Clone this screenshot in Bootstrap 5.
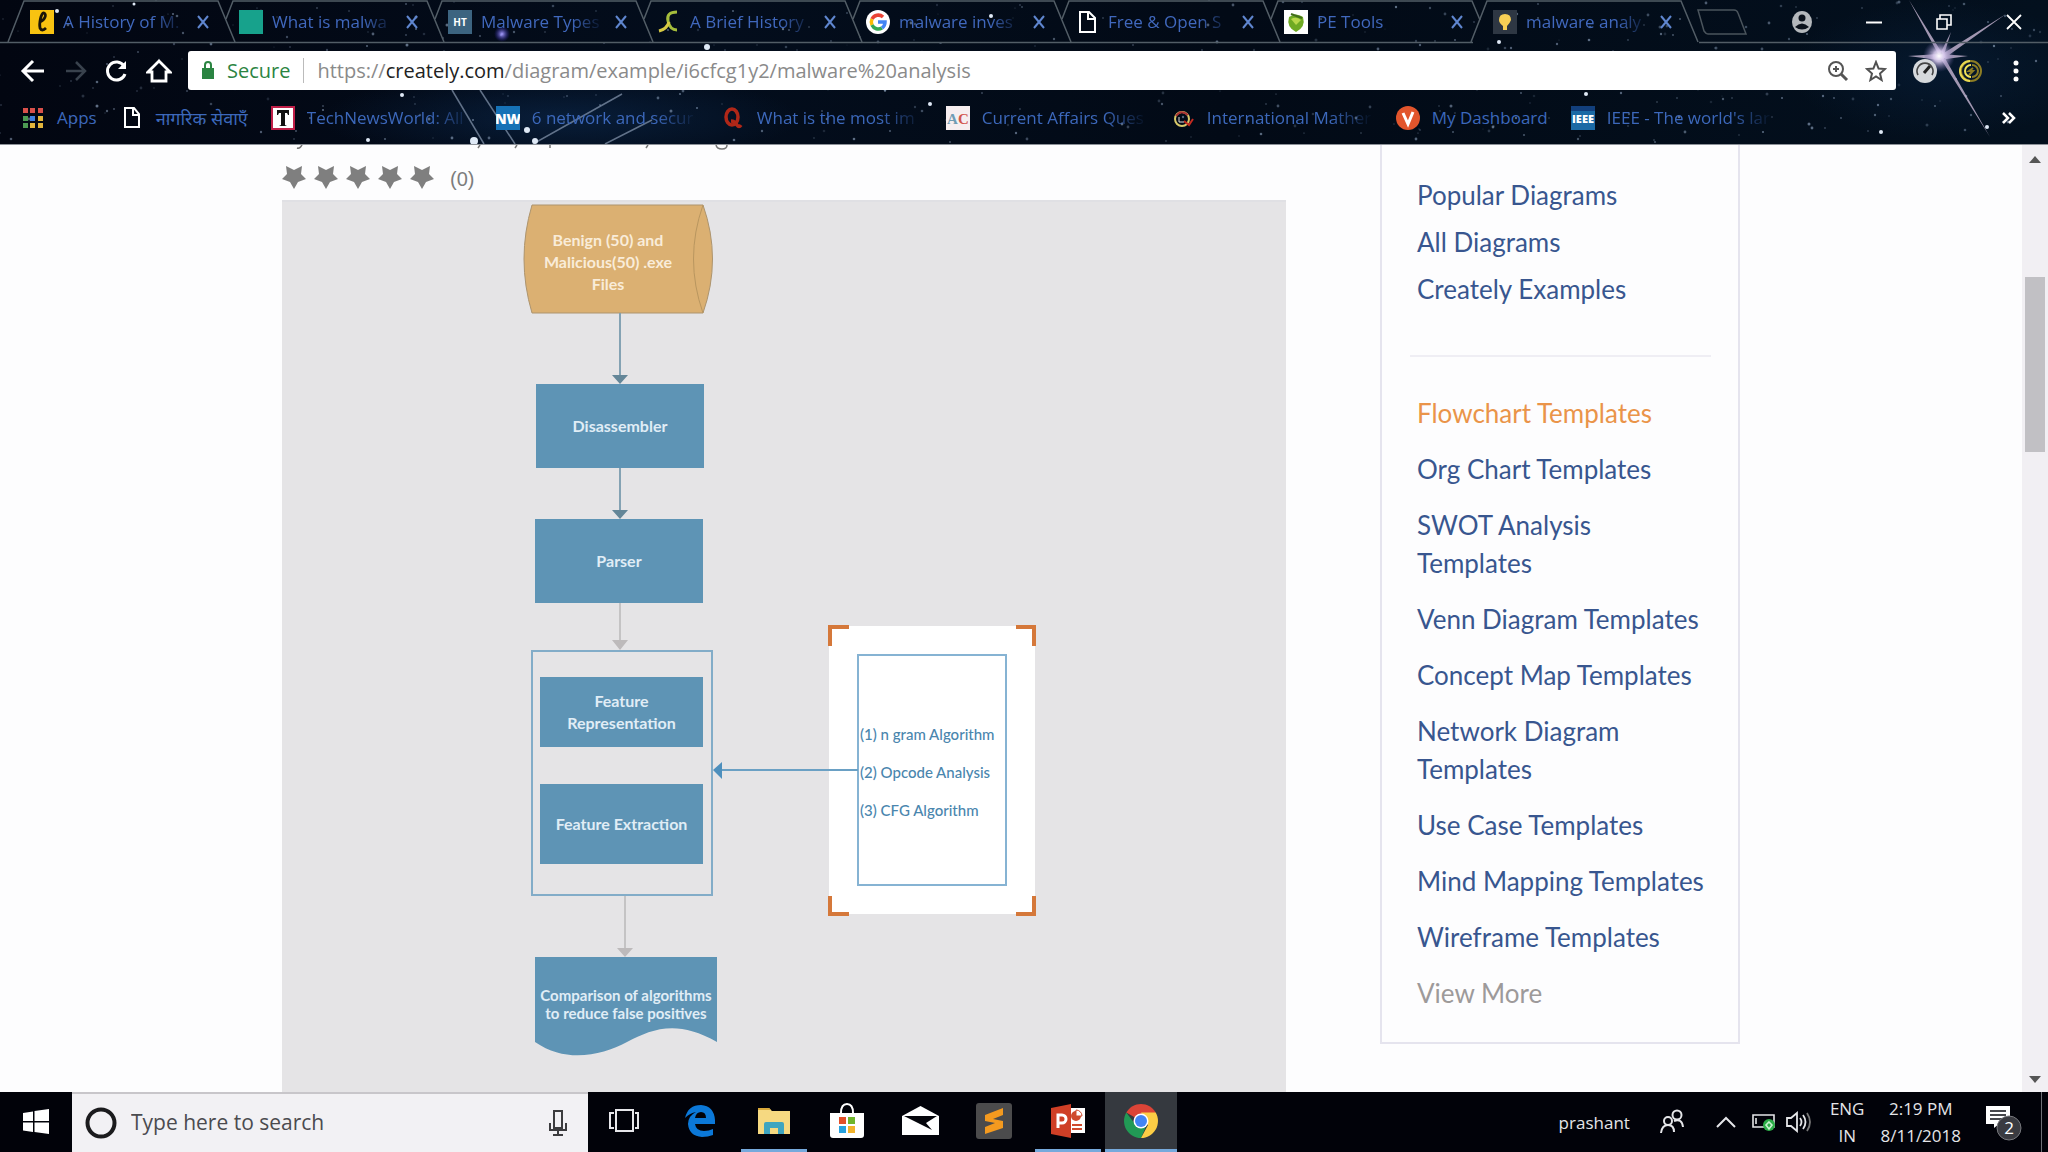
<!DOCTYPE html>
<html lang="en">
<head>
<meta charset="utf-8">
<meta name="viewport" content="width=device-width, initial-scale=1">
<title>malware analysis</title>
<link rel="stylesheet" href="https://cdn.jsdelivr.net/npm/bootstrap@5.3.0/dist/css/bootstrap.min.css">
<style>
  body { font-family: "Open Sans", "Noto Sans", sans-serif; background: #fdfdfe; overflow: hidden; }
  svg { display: block; flex: none; }
  button { background: none; border: 0; padding: 0; color: inherit; }
  a { text-decoration: none; }

  /* browser frame */
  .frame { height: 145px; background: linear-gradient(90deg, #020611, #030d1c 35%, #020a16 60%, #03101e); border-bottom: 1px solid #8d9299; color: #fff; z-index: 0; }
  .sky { z-index: -1; width: 100%; height: 144px; }
  .tabstrip { height: 43px; }
  .tab-slot { width: 209px; padding-left: 30px; height: 43px; }
  .tab-edge { left: 0; top: 0; overflow: visible; }
  .tab-title { width: 126px; margin-left: 9px; font-size: 17px; line-height: 24px; color: #4068bd; }
  .fade-end { white-space: nowrap; overflow: hidden; -webkit-mask-image: linear-gradient(90deg, #000 74%, transparent 100%); mask-image: linear-gradient(90deg, #000 74%, transparent 100%); }
  .tab-close { margin-left: 11px; }
  .new-tab { margin: 0 0 0 24px; }
  .window-keys { gap: 54px; padding-right: 26px; height: 38px; }
  .toolbar { height: 55px; padding: 0 24px 0 20px; }
  .omnibox { height: 39px; background: #fff; border-radius: 3px; font-size: 20px; color: #8a8a8a; padding: 0 9px 0 13px; }
  .safe { color: #2b8442; }
  .host { color: #222; }
  .url-rule { width: 1px; height: 25px; background: #bbb; margin: 0 13px; }
  .bookmarks { height: 46px; padding-left: 21px; padding-bottom: 6px; gap: 23px; font-size: 17px; line-height: 24px; }
  .bookmarks a { color: #3c68bb; gap: 12px; }
  .bm-label.fade-end { width: 166px; }
  .bm-hindi { font-size: 18px; }
  .bm-icon { width: 24px; }
  .bm-icon svg { margin: auto; }

  /* page */
  .sheet { max-width: 1458px; gap: 94px; }
  .rating { height: 55px; color: #7d7d7d; font: 20px/30px "Liberation Sans", sans-serif; padding: 9px 0 0; }
  .board { height: 1000px; background: #e5e4e6; border-top: 2px solid #e0e0e4; font: 16px/22px Lato, sans-serif; }
  .board-line { left: 0; top: 0; }
  .node { position: absolute; display: flex; align-items: center; justify-content: center; text-align: center; color: #e0edf6; font-weight: 700; }
  .blue { background: #5e94b5; }
  .n-drum { left: 241px; top: 6px; width: 170px; height: 108px; color: #f9ecd9; }
  .n-dis { left: 254px; top: 182px; width: 168px; height: 84px; }
  .n-par { left: 253px; top: 317px; width: 168px; height: 84px; }
  .n-group { left: 249px; top: 448px; width: 182px; height: 246px; border: 2px solid #82acc8; }
  .n-rep { left: 258px; top: 475px; width: 163px; height: 70px; }
  .n-ext { left: 258px; top: 582px; width: 163px; height: 80px; }
  .n-doc { left: 253px; top: 755px; width: 182px; height: 98px; font-size: 15px; line-height: 18px; padding-bottom: 4px; white-space: nowrap; }
  .n-note { left: 547px; top: 424px; width: 206px; height: 288px; background: #fff; padding: 28px; font-weight: 500; }
  .note-inner { border: 2px solid #86b3d3; color: #4a86ae; line-height: 38px; font-size: 15px; text-align: left; white-space: nowrap; padding: 4px 0 0 1px; }

  .side { width: 360px; border: 2px solid #e5e4ee; border-top: 0; padding: 31px 27px 12px 35px; font: 26px/38px Lato, sans-serif; }
  .side a { display: block; color: #38568f; }
  .side-top a { margin-bottom: 9px; }
  .side-list a { margin-bottom: 18px; }
  .side-rule { height: 2px; background: #efeef4; margin: 47px 0 37px -7px; }
  .side a.current { color: #ea9449; }
  .side a.more { color: #9d9a9a; }
  .scroll-rail { width: 26px; background: #f1eff3; padding: 10px 0 8px; }
  .scroll-thumb { width: 20px; height: 175px; background: #c1c0c4; margin-top: 114px; }

  /* taskbar */
  .taskbar { height: 60px; background: #010209; color: #e4e5e8; }
  .start { width: 72px; }
  .finder { width: 516px; background: #f2f1f4; border-top: 2px solid #c8c6ca; padding: 0 20px 0 13px; }
  .finder input { border: 0; outline: 0; background: transparent; font-size: 21px; color: #444; min-width: 0; margin-left: 13px; padding: 0; }
  .finder input::placeholder { color: #4b4b4f; opacity: 1; }
  .apps-row { width: 513px; margin-left: 4px; }
  .app-key { width: 72px; border-bottom: 3px solid transparent; }
  .running { border-image: linear-gradient(90deg, transparent 8%, #76a9dc 8%, #76a9dc 92%, transparent 92%) 3; border-style: solid; border-width: 0 0 3px; }
  .front { background: #35393f; border-bottom-color: #76a9dc; }
  .tray { font-size: 17px; line-height: 27px; }
  .tray-end { width: 1px; background: #6d6f76; margin-left: 18px; margin-right: 6px; }
</style>
</head>
<body>
<div class="d-flex flex-column vh-100">

  <header class="frame position-relative flex-shrink-0">
    <svg class="sky position-absolute" id="sky" aria-hidden="true">
      <defs>
        <radialGradient id="glow"><stop offset="0" stop-color="#fff"/><stop offset=".35" stop-color="#d8c9ee" stop-opacity=".9"/><stop offset="1" stop-color="#6a5fa0" stop-opacity="0"/></radialGradient>
        <radialGradient id="violet"><stop offset="0" stop-color="#a9a0ff"/><stop offset="1" stop-color="#2b1fb0" stop-opacity="0"/></radialGradient>
        <radialGradient id="haze"><stop offset="0" stop-color="#0c2a4f" stop-opacity=".6"/><stop offset="1" stop-color="#0c2a4f" stop-opacity="0"/></radialGradient>
      </defs>
      <ellipse cx="560" cy="118" rx="240" ry="46" fill="url(#haze)"/>
      <ellipse cx="1940" cy="70" rx="150" ry="70" fill="url(#haze)" opacity=".6"/>
      <g id="dust" fill="#9fb4d0"></g>
      <g stroke="#9fb0c8" stroke-width="1.5" opacity=".6"><path d="M452 90 484 144"/><path d="M480 90 515 144"/><path d="M533 144 622 94"/><path d="M605 144 652 120"/></g>
      <circle cx="502" cy="34" r="8" fill="url(#violet)"/>
      <g fill="#dfe9f6"><circle cx="474" cy="141" r="4"/><circle cx="527" cy="130" r="3"/><circle cx="535" cy="141" r="3"/><circle cx="402" cy="95" r="2"/><circle cx="368" cy="140" r="2"/><circle cx="707" cy="47" r="3"/><circle cx="930" cy="104" r="2"/><circle cx="991" cy="16" r="2"/><circle cx="1499" cy="42" r="2"/><circle cx="1586" cy="94" r="2"/><circle cx="57" cy="11" r="2"/><circle cx="134" cy="4" r="1.5"/><circle cx="1881" cy="132" r="2"/><circle cx="1987" cy="127" r="2"/></g>
      <path d="M1909 0 1936 50 1939 56 1990 137 1942 53Z M1939 56 2006 14 1942 60Z M1939 56 1951 32 1943 58Z M1908 56 1939 54 1968 56 1939 60Z" fill="#c9b8d4" opacity=".8"/>
      <circle cx="1939" cy="56" r="16" fill="url(#glow)"/>
      <path d="M0 42.500H1473M1699 42.500H4000" stroke="#525d66" stroke-width="1.500"/>
    </svg>

    <div class="tabstrip d-flex align-items-center" id="tabs">
      <div class="tab-slot d-flex align-items-center position-relative"><svg width="24" height="24"><rect width="24" height="24" fill="#f8c311"/><path d="M9 12C15 11 17 4 14 3S9 14 10 18Q12 22 16 18" fill="none" stroke="#1a1508" stroke-width="2.800"/></svg><span class="tab-title fade-end">A History of M.</span></div>
      <div class="tab-slot d-flex align-items-center position-relative"><svg width="24" height="24"><rect width="24" height="24" fill="#17a28c"/></svg><span class="tab-title fade-end">What is malwa</span></div>
      <div class="tab-slot d-flex align-items-center position-relative"><svg width="24" height="24"><rect width="24" height="24" fill="#3c6480"/><text x="12" y="16" font-size="10" font-weight="700" fill="#fff" text-anchor="middle">HT</text></svg><span class="tab-title fade-end">Malware Types</span></div>
      <div class="tab-slot d-flex align-items-center position-relative"><svg width="24" height="24" fill="none" stroke="#a5bd3c" stroke-width="3"><path d="M20 2Q9 2 11 11T20 20"/><path d="M12 12Q10 19 2 21" stroke="#d7c943"/></svg><span class="tab-title fade-end">A Brief History</span></div>
      <div class="tab-slot d-flex align-items-center position-relative"><svg width="24" height="24" fill="none" stroke-width="3.500"><circle cx="12" cy="12" r="12" fill="#fff"/><path d="M17 7A7 7 0 0 0 6 9" stroke="#ea4335"/><path d="M6 9A7 7 0 0 0 6 15" stroke="#fbbc05"/><path d="M6 15A7 7 0 0 0 16 18" stroke="#34a853"/><path d="M16 18Q19 16 19 12H12" stroke="#4285f4"/></svg><span class="tab-title fade-end">malware inves</span></div>
      <div class="tab-slot d-flex align-items-center position-relative"><svg width="24" height="24" fill="none" stroke="#fff" stroke-width="2"><path d="M5 2H14L20 8V22H5ZM13 2V9H20"/></svg><span class="tab-title fade-end">Free &amp; Open S</span></div>
      <div class="tab-slot d-flex align-items-center position-relative"><svg width="24" height="24"><rect width="24" height="24" fill="#fff"/><path d="M5 7Q12 2 19 7Q22 17 12 22Q2 17 5 7Z" fill="#6faa23"/><path d="M7 9Q12 6 17 10L12 15Z" fill="#b8d74a"/><path d="M7 4 18 8" stroke="#426e1b" stroke-width="2"/></svg><span class="tab-title fade-end">PE Tools</span></div>
      <div class="tab-slot d-flex align-items-center position-relative"><svg width="24" height="24"><rect width="24" height="24" fill="#2e3743"/><path d="M12 4Q18 4 18 10 17 13 14 16V20H10V16Q6 13 6 10 6 4 12 4Z" fill="#f7cf55"/></svg><span class="tab-title fade-end">malware analy</span></div>
      <button class="new-tab" aria-label="New tab"><svg width="52" height="26" fill="none" stroke="#4a545c" stroke-width="1.500"><path d="M2 1H38Q41 1 42 4L50 25H12Q10 25 8 22Z"/></svg></button>
      <div class="window-keys d-flex align-items-center ms-auto">
        <button aria-label="Profile"><svg width="20" height="22"><ellipse cx="10" cy="11" rx="10" ry="11" fill="#b4b8bc"/><circle cx="10" cy="7" r="3.500" fill="#0b121c"/><path d="M3 16Q10 9 17 16Q10 21 3 16Z" fill="#0b121c"/></svg></button>
        <button aria-label="Minimize"><svg width="16" height="16"><path d="M0 8.500H16" stroke="#fff" stroke-width="2"/></svg></button>
        <button aria-label="Restore"><svg width="16" height="16" fill="none" stroke="#fff" stroke-width="1.600"><path d="M1 5H11V15H1ZM4 5V1H15V11H11"/></svg></button>
        <button aria-label="Close"><svg width="16" height="16"><path d="M1 1 15 15M15 1 1 15" stroke="#fff" stroke-width="1.800"/></svg></button>
      </div>
    </div>

    <div class="toolbar d-flex align-items-center">
      <button class="me-3" aria-label="Back"><svg width="26" height="24" fill="none" stroke="#fff" stroke-width="3"><path d="M13 2 3 12 13 22M3 12H24"/></svg></button>
      <button class="ms-1 me-3" aria-label="Forward"><svg width="22" height="24" fill="none" stroke="#39424d" stroke-width="2.500"><path d="M10 3 19 12 10 21M19 12H0"/></svg></button>
      <button class="me-3" aria-label="Reload"><svg width="26" height="24" fill="none" stroke="#fff" stroke-width="3"><path d="M20 7A9 9 0 1 0 21 15"/><path d="M22 2V10H14Z" fill="#fff" stroke="none"/></svg></button>
      <button aria-label="Home"><svg width="26" height="24" fill="none" stroke="#fff" stroke-width="2.800"><path d="M13 2 2 13H6V22H20V13H24Z"/></svg></button>
      <div class="omnibox d-flex align-items-center flex-grow-1 ms-3">
        <svg width="14" height="20"><path d="M1 7H13V18H1Z" fill="#2b8442"/><path d="M4 8V4Q4 1 7 1T10 4V8" fill="none" stroke="#2b8442" stroke-width="2"/></svg>
        <span class="safe ms-2 ps-1">Secure</span><span class="url-rule"></span>
        <span class="flex-grow-1" role="textbox" aria-label="Address">https://<span class="host">creately.com</span>/diagram/example/i6cfcg1y2/malware%20analysis</span>
        <button class="me-3" aria-label="Zoom"><svg width="22" height="22" fill="none" stroke="#555" stroke-width="2"><circle cx="9" cy="9" r="7"/><path d="M14 14 20 20" stroke-width="3"/><path d="M6 9H12M9 6V12"/></svg></button>
        <button aria-label="Bookmark this page"><svg width="22" height="22" fill="none" stroke="#505050" stroke-width="2"><path d="M11 2 13.600 8.500 20 9 15 13.500 16.600 20 11 16.500 5.400 20 7 13.500 2 9 8.400 8.500Z"/></svg></button>
      </div>
      <button class="ms-3" aria-label="Speed extension"><svg width="26" height="26"><circle cx="13" cy="13" r="12" fill="#d6d9dc"/><path d="M6 17A8 8 0 1 1 20 17" fill="none" stroke="#444" stroke-width="1.600"/><path d="M12 15 18 8" stroke="#222" stroke-width="3"/></svg></button>
      <button class="ms-3 ps-1" aria-label="Coin extension"><svg width="26" height="26" fill="none" stroke="#8d7d24" stroke-width="2"><circle cx="13" cy="13" r="10"/><path d="M13 7A6 6 0 0 0 13 19" stroke="#f1e35a"/><path d="M12 3A10 10 0 0 0 12 23" stroke="#e8d952"/><path d="M14 7A6 6 0 0 1 14 19M15 10 11 13 15 13 11 17"/></svg></button>
      <button class="ms-4" aria-label="Menu"><svg width="16" height="24" fill="#fff"><circle cx="8" cy="4" r="2.500"/><circle cx="8" cy="12" r="2.500"/><circle cx="8" cy="20" r="2.500"/></svg></button>
    </div>

    <nav class="bookmarks d-flex align-items-center" aria-label="Bookmarks">
      <a href="#" class="d-flex align-items-center"><span class="bm-icon"><svg width="20" height="22"><g fill="#d8504a"><path d="M0 1h5v5H0zM7 1h5v5H7zM15 1h5v5h-5z"/></g><path d="M0 9h5v5H0zM0 16h5v5H0z" fill="#4c9a52"/><path d="M7 9h5v5H7z" fill="#3f7ede"/><path d="M15 9h5v5h-5zM7 16h5v5H7zM15 16h5v5h-5z" fill="#e2b53c"/></svg></span><span class="bm-label">Apps</span></a>
      <a href="#" class="d-flex align-items-center"><span class="bm-icon"><svg width="20" height="24" fill="none" stroke="#fff" stroke-width="2"><path d="M3 2H12L17 8V21H3ZM11 2V9H17"/></svg></span><span class="bm-label bm-hindi" lang="hi">नागरिक सेवाएँ</span></a>
      <a href="#" class="d-flex align-items-center"><span class="bm-icon"><svg width="24" height="24"><rect x="1" y="1" width="22" height="22" fill="#fff" stroke="#c01f48" stroke-width="2"/><path d="M6 4H18V9H17L16 7H14V19L16 20H8L10 19V7H8L7 9H6Z" fill="#111"/></svg></span><span class="bm-label fade-end">TechNewsWorld: All</span></a>
      <a href="#" class="d-flex align-items-center"><span class="bm-icon"><svg width="24" height="24"><rect width="24" height="24" fill="#1672b6"/><text x="12" y="18" font-size="14" font-weight="800" fill="#fff" text-anchor="middle">NW</text></svg></span><span class="bm-label fade-end">6 network and secur</span></a>
      <a href="#" class="d-flex align-items-center"><span class="bm-icon"><svg width="20" height="22" fill="none" stroke="#b02718" stroke-width="3.500"><ellipse cx="9" cy="10" rx="6" ry="8"/><path d="M8 14Q12 14 14 18 16 21 18 18"/></svg></span><span class="bm-label fade-end">What is the most im</span></a>
      <a href="#" class="d-flex align-items-center"><span class="bm-icon"><svg width="24" height="24" font-family="Liberation Serif" font-size="15" font-weight="700"><rect width="24" height="24" fill="#f6eef0"/><text x="1" y="18" fill="#6f9db4">A</text><text x="12" y="18" fill="#d2564e">C</text></svg></span><span class="bm-label fade-end">Current Affairs Ques</span></a>
      <a href="#" class="d-flex align-items-center"><span class="bm-icon"><svg width="22" height="22" fill="none" stroke-width="2"><circle cx="10" cy="12" r="7" stroke="#d8c96a"/><path d="M4 9Q9 2 16 8" stroke="#a33"/><path d="M12 14 17 18 21 12" stroke="#c22a20"/><path d="M7 10V15H12" stroke="#ddd" stroke-width="1"/></svg></span><span class="bm-label fade-end">International Mather</span></a>
      <a href="#" class="d-flex align-items-center"><span class="bm-icon"><svg width="24" height="24"><circle cx="12" cy="12" r="12" fill="#e2552c"/><path d="M7 7 12 18 17 6" fill="none" stroke="#fff" stroke-width="3"/></svg></span><span class="bm-label">My Dashboard</span></a>
      <a href="#" class="d-flex align-items-center"><span class="bm-icon"><svg width="24" height="24"><rect width="24" height="24" fill="#1b6aa5"/><rect width="24" height="5" fill="#123f7c"/><text x="12" y="17" font-size="11" font-weight="800" fill="#fff" text-anchor="middle">IEEE</text></svg></span><span class="bm-label fade-end">IEEE - The world's lar</span></a>
      <button class="ms-auto me-4 pe-2" aria-label="More bookmarks"><svg width="14" height="12" fill="none" stroke="#fff" stroke-width="2.500"><path d="M1 1 6 6 1 11M7 1 12 6 7 11"/></svg></button>
    </nav>
  </header>

  <div class="d-flex flex-grow-1 overflow-hidden">
    <main class="flex-grow-1 overflow-hidden">
      <div class="sheet d-flex align-items-start mx-auto">
        <section class="flex-grow-1 position-relative">
          <svg class="position-absolute top-0 start-0" width="500" height="6" fill="none" stroke="#777" stroke-width="1.500" aria-hidden="true"><path d="M20 0Q18 4 15 3M198 0 196 3M235 0 233 3M268 0V3M366 0 364 3M434 0Q435 4 440 4T445 0"/></svg>
          <div class="rating d-flex align-items-center">
            <div class="d-flex gap-2" id="stars" role="img" aria-label="0 of 5 stars"></div>
            <span class="ms-3 pt-1">(0)</span>
          </div>
          <div class="board position-relative">
            <svg class="board-line position-absolute" width="760" height="880" aria-hidden="true">
              <path d="M250 3H421Q440 57 421 111H250Q234 57 250 3Z" fill="#dbb072" stroke="#ad946e"/>
              <path d="M421 3Q402 57 421 111" fill="none" stroke="#b9965f"/>
              <g stroke="#84a2b3" stroke-width="2"><path d="M338 111V175M338 266V309"/></g>
              <path d="M330 173H346L338 182ZM330 308H346L338 317Z" fill="#648698"/>
              <g stroke="#c4c3c4" stroke-width="2"><path d="M338 401V440M343 694V748"/></g>
              <path d="M330 438H346L338 448ZM335 746H351L343 755Z" fill="#bdbabb"/>
              <path d="M253 755H435V840C395 817 370 827 345 840S285 862 253 840Z" fill="#5e94b5"/>
            </svg>
            <div class="node n-drum">Benign (50) and<br>Malicious(50) .exe<br>Files</div>
            <div class="node blue n-dis">Disassembler</div>
            <div class="node blue n-par">Parser</div>
            <div class="node n-group"></div>
            <div class="node blue n-rep">Feature<br>Representation</div>
            <div class="node blue n-ext">Feature Extraction</div>
            <div class="node n-doc">Comparison of algorithms<br>to reduce false positives</div>
            <div class="node n-note"><div class="note-inner w-100 h-100 d-flex flex-column justify-content-center"><div>(1) n gram Algorithm</div><div>(2) Opcode Analysis</div><div>(3) CFG Algorithm</div></div></div>
            <svg class="board-line position-absolute" width="760" height="880" aria-hidden="true">
              <path d="M437 568H576" stroke="#6aa0c4" stroke-width="2"/><path d="M431 568 440 560V577Z" fill="#4d8fbd"/>
              <g fill="none" stroke="#d5783a" stroke-width="4"><path d="M548 444V425H567M734 425H752V444M548 694V712H567M734 712H752V694"/></g>
            </svg>
          </div>
        </section>
        <aside class="side flex-shrink-0">
          <nav class="side-top"><a href="#">Popular Diagrams</a><a href="#">All Diagrams</a><a href="#">Creately Examples</a></nav>
          <div class="side-rule"></div>
          <nav class="side-list">
            <a href="#" class="current">Flowchart Templates</a><a href="#">Org Chart Templates</a><a href="#">SWOT Analysis<br>Templates</a><a href="#">Venn Diagram Templates</a><a href="#">Concept Map Templates</a><a href="#">Network Diagram<br>Templates</a><a href="#">Use Case Templates</a><a href="#">Mind Mapping Templates</a><a href="#">Wireframe Templates</a><a href="#" class="more">View More</a>
          </nav>
        </aside>
      </div>
    </main>
    <div class="scroll-rail d-flex flex-column align-items-center flex-shrink-0" aria-hidden="true">
      <svg width="12" height="8"><path d="M0 8 6 1 12 8Z" fill="#555"/></svg>
      <div class="scroll-thumb"></div>
      <svg class="mt-auto" width="12" height="8"><path d="M0 0 6 7 12 0Z" fill="#555"/></svg>
    </div>
  </div>

  <footer class="taskbar d-flex flex-shrink-0">
    <button class="start d-flex align-items-center justify-content-center" aria-label="Start"><svg width="26" height="26" fill="#fff"><path d="M0 4 10 2.500V12H0ZM11.500 2 26 0V12H11.500ZM0 13.500H10V23L0 21.500ZM11.500 13.500H26V25L11.500 23Z"/></svg></button>
    <div class="finder d-flex align-items-center">
      <svg width="33" height="33"><circle cx="16" cy="16" r="13.500" fill="none" stroke="#1b1b1d" stroke-width="4"/></svg>
      <input class="flex-grow-1" type="text" placeholder="Type here to search" aria-label="Search">
      <svg width="20" height="26" fill="none" stroke="#3c3c3e" stroke-width="2"><path d="M6 1H14V18H6ZM2 13V20H18V13M10 20V25M5 25H15"/></svg>
    </div>
    <button class="app-key d-flex align-items-center justify-content-center" aria-label="Task view"><svg width="30" height="24" fill="none" stroke="#e6e6ea" stroke-width="2"><path d="M7 1H24V22H7ZM5 4H1V19H5M26 4H29V19H26"/></svg></button>
    <div class="apps-row d-flex justify-content-between">
      <button class="app-key d-flex align-items-center justify-content-center" aria-label="Edge"><svg width="32" height="34"><path d="M1 14Q4 1 17 1 30 2 31 16V20H11Q12 27 20 27 25 27 29 25V31Q24 33 18 33 5 32 4 20 4 12 12 8 6 9 1 14ZM11 14H22Q22 8 17 8 12 8 11 14Z" fill="#0b78d8" fill-rule="evenodd"/></svg></button>
      <button class="app-key running d-flex align-items-center justify-content-center" aria-label="File Explorer"><svg width="34" height="30"><path d="M1 2H12L15 5H33V28H1Z" fill="#f6d981"/><path d="M1 2H12L14 4H1Z" fill="#d9a93a"/><path d="M7 28V18Q7 16 9 16H25Q27 16 27 18V28H21V22H13V28Z" fill="#3fa5c0"/></svg></button>
      <button class="app-key d-flex align-items-center justify-content-center" aria-label="Store"><svg width="36" height="36"><path d="M1 10H35V32Q35 35 32 35H4Q1 35 1 32Z" fill="#fff"/><path d="M12 10Q12 1 18 1T24 10" fill="none" stroke="#fff" stroke-width="2"/><path d="M10 14h7v7h-7z" fill="#e2502a"/><path d="M19 14h7v7h-7z" fill="#6fb52c"/><path d="M10 23h7v7h-7z" fill="#27a2df"/><path d="M19 23h7v7h-7z" fill="#f2b32c"/></svg></button>
      <button class="app-key d-flex align-items-center justify-content-center" aria-label="Mail"><svg width="37" height="30"><path d="M0 10 18.500 0 37 10V29H0Z" fill="#fff"/><path d="M2 10H35L24 17 30 24 16 17Z" fill="#04050b"/></svg></button>
      <button class="app-key d-flex align-items-center justify-content-center" aria-label="Sublime Text"><svg width="36" height="36"><rect width="36" height="36" rx="3" fill="#4b4b4c"/><path d="M9 12 27 5V12L17 16 27 18V25L9 31V24L19 20 9 18Z" fill="#f49a1f"/></svg></button>
      <button class="app-key running d-flex align-items-center justify-content-center" aria-label="PowerPoint"><svg width="36" height="34"><rect x="18" y="4" width="17" height="25" fill="#fff"/><path d="M22 21H32M22 25H32" stroke="#cf4a2d" stroke-width="2"/><circle cx="26" cy="12" r="5" fill="#cf4a2d"/><path d="M26 12V6A6 6 0 0 1 32 12Z" fill="#fff" stroke="#cf4a2d"/><path d="M1 4 21 0V34L1 30Z" fill="#cf3f26"/><path d="M8 24V11H12A4 4 0 0 1 12 19H8" fill="none" stroke="#fff" stroke-width="3"/></svg></button>
      <button class="app-key front d-flex align-items-center justify-content-center" aria-label="Chrome"><svg width="34" height="34" viewBox="-17 -17 34 34"><path d="M0 0-14.700-8.500A17 17 0 0 1 14.700-8.500Z" fill="#db4437"/><path d="M-14.700-8.500A17 17 0 0 0 0 17L6 3-6 3Z" fill="#219a55"/><path d="M0 17A17 17 0 0 0 14.700-8.500H0L7 4Z" fill="#fccd45"/><circle r="7.500" fill="#fff"/><circle r="6" fill="#4285f4"/></svg></button>
    </div>
    <div class="tray d-flex align-items-center ms-auto">
      <span>prashant</span>
      <svg class="ms-4 me-1" width="42" height="26" fill="none" stroke="#e4e5e8" stroke-width="2"><circle cx="14" cy="12" r="4"/><path d="M7 24Q8 16 14 16T20 23"/><circle cx="23" cy="6" r="4.500"/><path d="M20 12Q28 9 29 18"/></svg>
      <svg class="mx-3" width="20" height="12" fill="none" stroke="#e4e5e8" stroke-width="2"><path d="M1 11 10 2 19 11"/></svg>
      <svg width="24" height="20" fill="none" stroke="#e4e5e8" stroke-width="1.600"><path d="M1 3H22V15H1ZM4 6V12"/><circle cx="17" cy="13" r="6" fill="#2cae48" stroke="none"/><path d="M17 10 20 13 17 17 14 13Z" stroke="#c7f3cf"/></svg>
      <svg class="ms-2 me-3" width="30" height="24" fill="none" stroke="#e4e5e8" stroke-width="1.800"><path d="M3 8H7L13 3V21L7 16H3ZM16 8Q19 12 16 16M19 5Q24 12 19 19"/><path d="M23 3Q29 12 23 21" stroke="#777"/></svg>
      <div class="text-center">ENG<br>IN</div>
      <div class="text-center ms-3">2:19 PM<br>8/11/2018</div>
      <button class="ms-4" aria-label="Notifications, 2 new"><svg width="38" height="40"><path d="M1 4H25V22H14L9 26V22H1Z" fill="#fff"/><path d="M5 9H21M5 13H21M5 17H21" stroke="#0a0b12" stroke-width="1.600"/><circle cx="24" cy="26" r="12" fill="#3a3b41" stroke="#77787d"/><text x="24" y="32" font-size="17" fill="#fff" text-anchor="middle">2</text></svg></button>
      <span class="tray-end align-self-stretch"></span>
    </div>
  </footer>
</div>
<script src="https://cdn.jsdelivr.net/npm/bootstrap@5.3.0/dist/js/bootstrap.bundle.min.js"></script>
<script>
  // tab outlines and close buttons
  const slots = document.querySelectorAll('.tab-slot');
  slots.forEach((slot, i) => {
    const last = i === slots.length - 1;
    const left = i === 0 || last ? 'M8 42 24 1' : 'M17 19 24 1';
    const right = i === slots.length - 2 ? 'L226 20' : 'L235 42';
    slot.insertAdjacentHTML('beforeend',
      `<button class="tab-close" aria-label="Close tab"><svg width="12" height="14"><path d="M1 1 11 13M11 1 1 13" stroke="#5f86cf" stroke-width="2"/></svg></button>
       <svg class="tab-edge position-absolute pe-none" width="209" height="43" fill="none" stroke="#525d66" stroke-width="1.500"><path d="${left}H218${right}"/></svg>`);
  });
  // rating stars
  document.getElementById('stars').innerHTML =
    '<svg width="24" height="24" fill="#7f7f7f"><path d="M12 24 8 17 0 14 5 9 4 1 12 5 20 1 19 9 24 14 16 17Z"/></svg>'.repeat(5);
  // faint star dust over the frame
  let seed = 7, dust = '';
  const rnd = () => (seed = (seed * 16807) % 2147483647) / 2147483647;
  for (let i = 0; i < 420; i++)
    dust += `<circle cx="${Math.round(rnd() * 2048)}" cy="${Math.round(rnd() * 144)}" r="${(0.6 + rnd() * 0.9).toFixed(1)}" opacity="${(0.15 + rnd() * 0.45).toFixed(2)}"/>`;
  document.getElementById('dust').innerHTML = dust;
</script>
</body>
</html>
